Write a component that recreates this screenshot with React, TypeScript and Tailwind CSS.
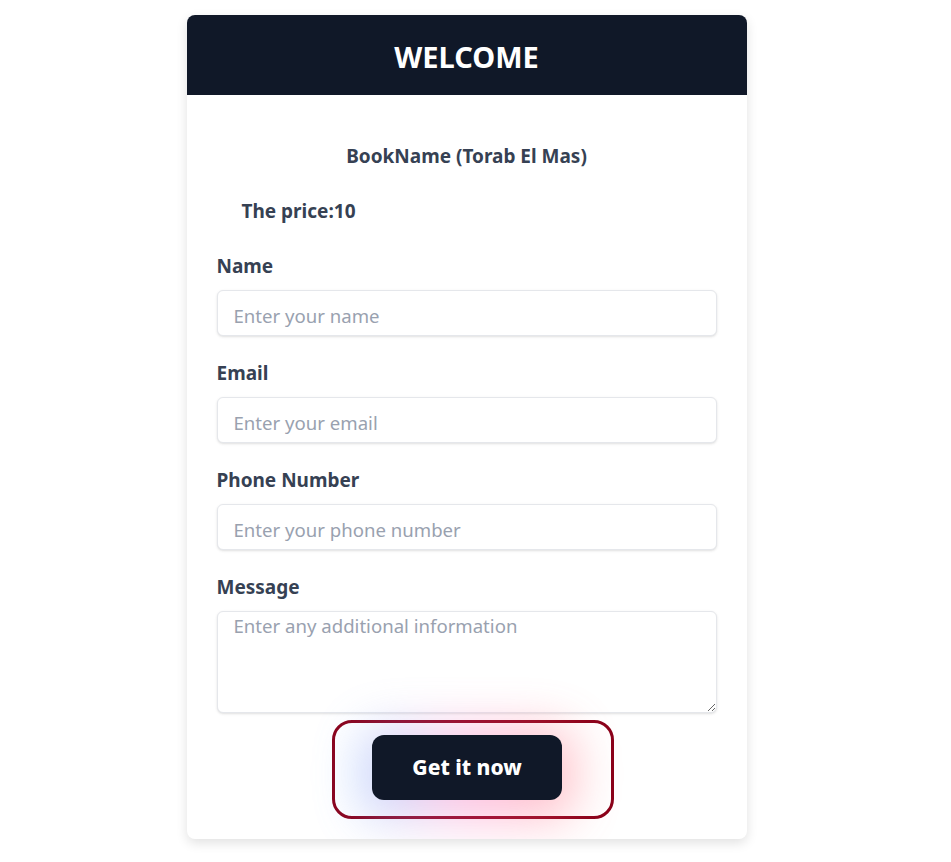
export default function App() {
  return (
    <div className="min-h-screen bg-white pt-[15px] pr-[18px] font-['Noto_Sans',sans-serif]">
      <div className="mx-auto w-[560px] overflow-hidden rounded-lg bg-white shadow-[0_4px_12px_rgba(0,0,0,0.12)]">
        {/* Header */}
        <div className="flex h-[80px] items-center justify-center bg-gray-900 pt-1">
          <h1 className="text-[29px] font-bold text-white">WELCOME</h1>
        </div>

        {/* Form body */}
        <div className="px-[30px] pt-12 pb-5">
          <p className="mb-7 text-center text-[19px] leading-[27px] font-bold text-gray-700">BookName (Torab El Mas)</p>
          <p className="mb-7 pl-[25px] text-[19px] leading-[27px] font-bold text-gray-700">The price:10</p>

          {[
            ['Name', 'Enter your name', 'text'],
            ['Email', 'Enter your email', 'email'],
            ['Phone Number', 'Enter your phone number', 'tel'],
          ].map(([label, ph, type]) => (
            <div key={label} className="mb-6">
              <label className="mb-2.5 block text-[19px] leading-[27px] font-bold text-gray-700">{label}</label>
              <input
                type={type}
                placeholder={ph}
                className="h-[46px] w-full rounded-md border border-gray-200 bg-white px-4 pt-1 text-[18.6px] text-gray-700 shadow-sm outline-none placeholder:text-gray-400"
              />
            </div>
          ))}

          <div>
            <label className="mb-2.5 block text-[19px] leading-[27px] font-bold text-gray-700">Message</label>
            <textarea
              placeholder="Enter any additional information"
              className="block h-[102px] w-full rounded-md border border-gray-200 bg-white px-4 pt-0 text-[18.6px] text-gray-700 shadow-sm outline-none placeholder:text-gray-400"
            />
          </div>

          {/* Button area */}
          <div className="mt-[7px] flex justify-center">
            <div className="ml-[13px] rounded-[20px] border-[3px] border-[#8a0019] pt-3 pr-[49px] pb-4 pl-[37px]">
              <div className="relative">
                <div className="absolute -inset-x-3 -top-2 -bottom-5 rounded-3xl bg-gradient-to-r from-blue-400 via-pink-400 to-red-400 opacity-40 blur-xl" />
                <button className="relative h-[65px] w-[190px] rounded-xl bg-gray-900 text-[21px] font-extrabold text-white">
                  Get it now
                </button>
              </div>
            </div>
          </div>
        </div>
      </div>
    </div>
  );
}
